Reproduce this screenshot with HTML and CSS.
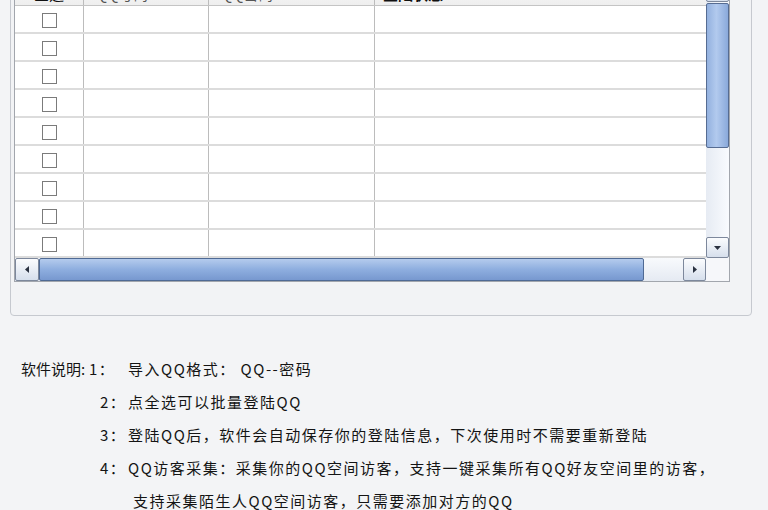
FILE: index.html
```html
<!DOCTYPE html>
<html lang="zh-CN">
<head>
<meta charset="utf-8">
<title>QQ</title>
<link rel="stylesheet" href="styles.css">
</head>
<body>
<div class="group">
  <div class="grid">
    <div class="main">
      <div class="row head">
        <div class="cell c1"><span class="hchk"></span>全选</div>
        <div class="cell">QQ号码</div>
        <div class="cell">QQ密码</div>
        <div class="cell strong">登陆状态</div>
      </div>
      <div class="row"><div class="cell c1"><span class="chk"></span></div><div class="cell"></div><div class="cell"></div><div class="cell"></div></div>
      <div class="row"><div class="cell c1"><span class="chk"></span></div><div class="cell"></div><div class="cell"></div><div class="cell"></div></div>
      <div class="row"><div class="cell c1"><span class="chk"></span></div><div class="cell"></div><div class="cell"></div><div class="cell"></div></div>
      <div class="row"><div class="cell c1"><span class="chk"></span></div><div class="cell"></div><div class="cell"></div><div class="cell"></div></div>
      <div class="row"><div class="cell c1"><span class="chk"></span></div><div class="cell"></div><div class="cell"></div><div class="cell"></div></div>
      <div class="row"><div class="cell c1"><span class="chk"></span></div><div class="cell"></div><div class="cell"></div><div class="cell"></div></div>
      <div class="row"><div class="cell c1"><span class="chk"></span></div><div class="cell"></div><div class="cell"></div><div class="cell"></div></div>
      <div class="row"><div class="cell c1"><span class="chk"></span></div><div class="cell"></div><div class="cell"></div><div class="cell"></div></div>
      <div class="row"><div class="cell c1"><span class="chk"></span></div><div class="cell"></div><div class="cell"></div><div class="cell"></div></div>
    </div>
    <div class="vscroll">
      <div class="btn up"></div>
      <div class="vthumb"></div>
      <div class="vtrack"></div>
      <div class="btn down"><svg width="7" height="4" viewBox="0 0 7 4"><path d="M0 0H7L3.5 4Z" fill="#2a3140"/></svg></div>
    </div>
    <div class="hscroll">
      <div class="btn left"><svg width="4" height="7" viewBox="0 0 4 7"><path d="M4 0V7L0 3.5Z" fill="#2a3140"/></svg></div>
      <div class="hthumb"></div>
      <div class="htrack"></div>
      <div class="btn right"><svg width="4" height="7" viewBox="0 0 4 7"><path d="M0 0V7L4 3.5Z" fill="#2a3140"/></svg></div>
    </div>
    <div class="corner"></div>
  </div>
</div>
<div class="notes">
  <div class="line"><span class="label">软件说明:</span><span class="num n1">1：</span><span class="txt">导入QQ格式： QQ--密码</span></div>
  <div class="line ind"><span class="num">2：</span><span class="txt">点全选可以批量登陆QQ</span></div>
  <div class="line ind"><span class="num">3：</span><span class="txt">登陆QQ后，软件会自动保存你的登陆信息，下次使用时不需要重新登陆</span></div>
  <div class="line ind"><span class="num">4：</span><span class="txt">QQ访客采集：采集你的QQ空间访客，支持一键采集所有QQ好友空间里的访客，</span></div>
  <div class="line cont"><span class="txt">支持采集陌生人QQ空间访客，只需要添加对方的QQ</span></div>
</div>
</body>
</html>
```
FILE: styles.css
```css
* { box-sizing: border-box; }
html, body { margin: 0; padding: 0; }
body {
  width: 768px;
  height: 510px;
  overflow: hidden;
  background: #f3f4f6;
  font-family: "Noto Sans CJK SC", "Noto Sans", sans-serif;
  color: #141414;
}
.group {
  margin: -30px 16px 0 10px;
  padding: 5px 21px 33px 3px;
  border: 1px solid #c6c9cf;
  border-radius: 4px;
  background: #f2f3f5;
}
.grid {
  display: grid;
  grid-template-columns: 691px 23px;
  grid-template-rows: 281px 23px;
  border: 1px solid #a2a6ad;
  background: #fff;
}
.main { overflow: hidden; }
.row {
  display: grid;
  grid-template-columns: 69px 125px 166px 1fr;
  height: 28px;
  border-bottom: 2px solid #dcdcdc;
}
.cell {
  border-right: 1px solid #bcbcbc;
  display: flex;
  align-items: center;
}
.cell:last-child { border-right: none; }
.c1 { justify-content: center; }
.chk {
  width: 15px;
  height: 15px;
  border: 1px solid #7b7b7b;
  background: #fff;
  margin-top: 2px;
}
.head {
  height: 29px;
  border-bottom: 1px solid #c4c4c4;
  background: linear-gradient(#ffffff, #eeeeee);
  font-size: 15px;
  line-height: 18px;
}
.head .cell {
  align-items: flex-end;
  padding: 0 0 2px 12px;
  color: #555;
}
.head .c1 { justify-content: flex-start; padding-left: 2px; color: #111; }
.head .strong { color: #111; font-weight: bold; padding-left: 8px; }
.hchk {
  width: 14px;
  height: 14px;
  border: 1px solid #5577aa;
  border-radius: 2px;
  background: linear-gradient(#c8daf4, #7c9ed4);
  margin: 0 3px 3px 0;
}
.vscroll {
  display: flex;
  flex-direction: column;
  background: linear-gradient(to right, #e6ebf3, #f9fbfe);
}
.btn {
  border: 1px solid #7d889c;
  border-radius: 2px;
  background: linear-gradient(#fbfcfe, #d6dfec);
  display: flex;
  align-items: center;
  justify-content: center;
}
.up { height: 25px; }
.vthumb {
  margin-top: 1px;
  height: 145px;
  border: 1px solid #566c92;
  border-radius: 2px;
  background: linear-gradient(to right, #93b1df, #b2caee 45%, #8aa9da);
}
.vtrack { flex: 1; }
.down { height: 21px; }
.hscroll {
  display: flex;
  background: linear-gradient(#f8fafd, #e5eaf2);
}
.left { width: 24px; }
.hthumb {
  width: 605px;
  border: 1px solid #4f6a94;
  border-radius: 2px;
  background: linear-gradient(#b4cbed, #8eaedf 50%, #7798cf);
}
.htrack { flex: 1; }
.right { width: 23px; }
.corner { background: #f6f7fa; }

.notes {
  margin-top: 36px;
  padding-left: 21px;
  font-size: 15px;
  letter-spacing: 1.5px;
}
.line {
  display: flex;
  height: 33px;
  line-height: 33px;
  white-space: nowrap;
}
.label { width: 68px; letter-spacing: 0; }
.num { width: 28px; }
.n1 { width: 39px; }
.ind { padding-left: 79px; }
.cont { padding-left: 112px; }
```
